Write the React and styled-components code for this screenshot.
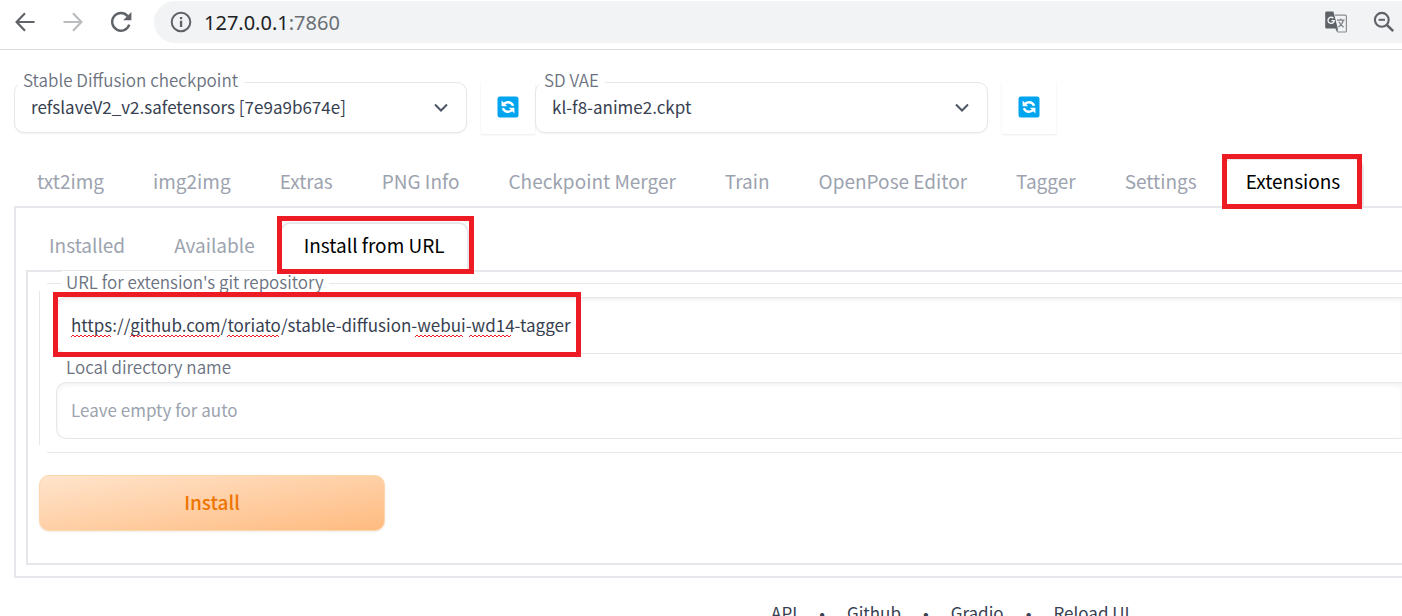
import React, { useState } from "react";
import styled, { createGlobalStyle, css } from "styled-components";

const GlobalStyle = createGlobalStyle`
  *, *::before, *::after { box-sizing: border-box; }
  body {
    margin: 0;
    background: #ffffff;
    color: #374151;
    font-family: "Noto Sans CJK KR", "Noto Sans CJK SC", "Noto Sans", sans-serif;
    font-weight: 400;
  }
  button, input, select { font: inherit; color: inherit; margin: 0; }
`;

const line = "#e5e7eb";
const red = "#ed1c24";

const Window = styled.div`
  height: 100vh;
  overflow: hidden;
`;

/* Browser toolbar */

const BrowserBar = styled.header`
  display: flex;
  align-items: flex-start;
  height: 50px;
  padding: 1px 0 0 1px;
  border-bottom: 1px solid #dadce0;
`;

const BarButton = styled.button`
  display: flex;
  align-items: center;
  justify-content: center;
  flex: none;
  width: ${(p) => (p.$compact ? 36 : 48)}px;
  height: 42px;
  padding: 0;
  border: 0;
  background: none;
  color: ${(p) => (p.$dim ? "#babcbe" : "#5f6368")};
`;

const AddressBar = styled.div`
  display: flex;
  align-items: center;
  flex: 1;
  height: 42px;
  margin-left: 9px;
  border-radius: 21px 0 0 21px;
  background: #f1f3f4;
`;

const PageActions = styled.div`
  display: flex;
  gap: 12px;
`;

const SiteInfo = styled.button`
  display: flex;
  padding: 0 12px 0 16px;
  border: 0;
  background: none;
  color: #5f6368;
`;

const Address = styled.div`
  flex: 1;
  padding-top: 2px;
  font-family: "Noto Sans", "Open Sans", sans-serif;
  font-size: 20px;
  font-weight: 400;
  line-height: 28px;
  color: #202124;
`;

const Port = styled.span`
  color: #6b6f74;
`;

/* Checkpoint and VAE pickers */

const Main = styled.main`
  padding: 32px 0 0 14px;
`;

const QuickSettings = styled.section`
  display: flex;
  align-items: flex-start;
`;

const Picker = styled.div`
  position: relative;
  flex: 0 1 453px;
  margin-right: 14px;
`;

const labelText = css`
  font-size: 17px;
  font-weight: 350;
  line-height: 22px;
  color: #6b7280;
`;

const PickerLabel = styled.label`
  position: absolute;
  top: -13px;
  left: 4px;
  padding: 0 6px 0 5px;
  background: #ffffff;
  ${labelText}
`;

const PickerSelect = styled.select`
  display: block;
  width: 100%;
  height: 51px;
  padding: 0 48px 2px 16px;
  border: 1px solid ${line};
  border-radius: 10px;
  background: #ffffff;
  box-shadow: 0 1px 2px rgba(0, 0, 0, 0.05);
  appearance: none;
  font-size: 17px;
  color: #374151;
`;

const PickerArrow = styled.svg`
  position: absolute;
  top: 20px;
  right: 19px;
  pointer-events: none;
`;

const RefreshButton = styled.button`
  display: flex;
  align-items: center;
  justify-content: center;
  flex: none;
  width: 54px;
  height: 52px;
  padding: 0 0 2px;
  border: 0;
  background: #ffffff;
  box-shadow: 0 1px 2px rgba(0, 0, 0, 0.08);
`;

/* Tabs */

const TabList = styled.div`
  display: flex;
  gap: 1px;
  height: ${(p) => p.$height}px;
  margin-left: -1px;
  align-items: flex-end;
`;

const highlight = css`
  &::after {
    content: "";
    position: absolute;
    inset: ${(p) => p.$frame};
    border: 5px solid ${red};
    pointer-events: none;
    z-index: 2;
  }
`;

const TabButton = styled.button`
  position: relative;
  flex: none;
  height: 50px;
  margin-bottom: -2px;
  padding: 0 22px 6px;
  border: 2px solid transparent;
  border-bottom: 0;
  border-radius: 10px 10px 0 0;
  background: none;
  font-size: 19px;
  line-height: 42px;
  color: #9ca3af;

  &[aria-selected="true"] {
    border-color: ${line};
    background: #ffffff;
    color: #000000;
  }

  ${(p) => p.$frame && highlight}
`;

const Panel = styled.section`
  border: 2px solid ${line};
  border-right: 0;
  padding: ${(p) => (p.$inner ? "11px 0 32px 11px" : "10px 0 11px 10px")};
`;

/* Install form */

const Group = styled.div`
  position: relative;
  padding: 14px 0 14px 17px;

  &::before,
  &::after {
    content: "";
    position: absolute;
    border: 0 solid ${line};
    pointer-events: none;
  }
  &::before {
    inset: 0 0 0 8px;
    border-width: 1px 0;
  }
  &::after {
    inset: 8px 0 8px 0;
    border-left-width: 1px;
  }
`;

const GroupLabel = styled.label`
  display: block;
  height: 28px;
  padding: 2px 0 0 10px;
  ${labelText}
`;

const FloatingLabel = styled.label`
  position: absolute;
  z-index: 1;
  top: -12px;
  left: 22px;
  padding: 0 5px;
  background: #ffffff;
  ${labelText}
`;

const Field = styled.div`
  position: relative;
  z-index: 1;
`;

const TextBox = styled.input`
  display: block;
  width: 100%;
  height: 57px;
  padding: 0 14px 2px;
  border: 1px solid ${line};
  border-right: 0;
  border-radius: 10px 0 0 10px;
  background: #ffffff;
  box-shadow: inset 0 2px 4px rgba(0, 0, 0, 0.06);
  font-size: 17px;
  color: #374151;

  &::placeholder {
    color: #9ca3af;
    opacity: 1;
  }
`;

const Squiggles = styled.svg`
  position: absolute;
  top: 37px;
  left: 15px;
  pointer-events: none;
`;

const Frame = styled.div`
  position: absolute;
  top: -5px;
  left: -3px;
  width: 528px;
  height: 65px;
  border: 5px solid ${red};
  pointer-events: none;
`;

const InstallButton = styled.button`
  display: block;
  width: 346px;
  height: 56px;
  margin-top: 22px;
  padding: 0 0 3px;
  border: 1px solid #fed7aa;
  border-radius: 10px;
  background: linear-gradient(to bottom right, #ffe4cc, #ffbb80);
  box-shadow: 0 1px 2px rgba(0, 0, 0, 0.08);
  font-size: 19px;
  font-weight: 500;
  color: #ee7400;
`;

const Footer = styled.footer`
  display: flex;
  gap: 22px;
  padding: 23px 0 0 55%;
  font-size: 17px;
  line-height: 24px;
  white-space: nowrap;

  a {
    color: inherit;
    text-decoration: none;
  }
`;

const BackIcon = () => (
  <svg width="20" height="20" viewBox="0 0 20 20" fill="none" stroke="currentColor" strokeWidth="2.2">
    <path d="M19.5 10H2M10 1.2L1.6 10L10 18.8" />
  </svg>
);

const ForwardIcon = () => (
  <svg width="20" height="20" viewBox="0 0 20 20" fill="none" stroke="currentColor" strokeWidth="2.2">
    <path d="M.5 10H18M10 1.2L18.4 10L10 18.8" />
  </svg>
);

const ReloadIcon = () => (
  <svg width="22" height="22" viewBox="0 0 22 22" fill="none">
    <path d="M19.3 13.6A8.8 8.8 0 1 1 17.6 5.1" stroke="currentColor" strokeWidth="2.4" />
    <path d="M21.4 1V9.2H13.2Z" fill="currentColor" />
  </svg>
);

const InfoIcon = () => (
  <svg width="22" height="22" viewBox="0 0 22 22" fill="none">
    <circle cx="11" cy="11" r="9.3" stroke="currentColor" strokeWidth="2" />
    <path d="M9.9 9.8h2.3v6.2H9.9zM9.9 6h2.3v2.3H9.9z" fill="currentColor" />
  </svg>
);

const TranslateIcon = () => (
  <svg width="22" height="22" viewBox="0 0 22 22" fill="none">
    <path d="M10 4.2h10.2a1.2 1.2 0 0 1 1.2 1.2v14.4a1.2 1.2 0 0 1-1.2 1.2h-7.4l-2-4" stroke="#8a8d91" strokeWidth="1.2" />
    <path d="M1.6.6h6.8l4.4 17H1.6A1.4 1.4 0 0 1 .2 16.2V2A1.4 1.4 0 0 1 1.6.6Z" fill="#5f6368" />
    <path d="M10.6 17.4h2.6l-1.3 3.2z" fill="#5f6368" />
    <path d="M8.4 7.2a3.1 3.1 0 1 0 .8 2.4H6.4" stroke="#f1f3f4" strokeWidth="1.4" />
    <path d="M12 9.2h7.6M15.8 7.4v1.8M18.3 9.4c-.6 2.7-2.4 5-4.8 6.6M13.9 10.8c.9 2.2 2.5 3.9 4.7 5.4" stroke="#7d8085" strokeWidth="1.2" />
  </svg>
);

const ZoomOutIcon = () => (
  <svg width="22" height="22" viewBox="0 0 22 22" fill="none" stroke="currentColor">
    <circle cx="8.8" cy="8.8" r="6.9" strokeWidth="2.1" />
    <path d="M5.6 8.8h6.4" strokeWidth="2" />
    <path d="M13.8 13.8L20.2 20.2" strokeWidth="2.6" />
  </svg>
);

const RefreshIcon = () => (
  <svg width="22" height="22" viewBox="0 0 22 22">
    <rect x=".5" y=".5" width="21" height="21" rx="2.5" fill="#00a4ef" />
    <g fill="none" stroke="#fff" strokeWidth="2.4">
      <path d="M6.4 8.6C8.6 5.4 14 5 16.2 9.8" />
      <path d="M15.6 13.4C13.4 16.6 8 17 5.8 12.2" />
    </g>
    <path d="M4.6 4.6v5.6h5.6zM17.4 17.4v-5.6h-5.6z" fill="#fff" />
  </svg>
);

const Chevron = () => (
  <PickerArrow width="14" height="12" viewBox="0 0 14 12" fill="none" aria-hidden="true">
    <path d="M1 2.5L7 8.5L13 2.5" stroke="#4b5563" strokeWidth="2" />
  </PickerArrow>
);

const misspelled = [
  [0, 41],
  [59, 149],
  [156, 209],
  [344, 392],
  [398, 441],
];

const wave = ([from, to]) => {
  let d = `M${from} 3`;
  for (let x = from + 2, up = true; x <= to; x += 2, up = !up) d += `L${x} ${up ? 1 : 3}`;
  return d;
};

const mainTabs = [
  "txt2img",
  "img2img",
  "Extras",
  "PNG Info",
  "Checkpoint Merger",
  "Train",
  "OpenPose Editor",
  "Tagger",
  "Settings",
  "Extensions",
];
const extensionTabs = ["Installed", "Available", "Install from URL"];
const footerLinks = ["API", "Github", "Gradio", "Reload UI"];

function QuickPicker({ id, label, value }) {
  return (
    <>
      <Picker>
        <PickerSelect id={id} defaultValue={value}>
          <option>{value}</option>
        </PickerSelect>
        <PickerLabel htmlFor={id}>{label}</PickerLabel>
        <Chevron />
      </Picker>
      <RefreshButton aria-label={`Refresh ${label}`}>
        <RefreshIcon />
      </RefreshButton>
    </>
  );
}

function Tabs({ names, active, height, frame }) {
  return (
    <TabList role="tablist" $height={height}>
      {names.map((name) => (
        <TabButton
          key={name}
          role="tab"
          aria-selected={name === active}
          $frame={name === active ? frame : undefined}
        >
          {name}
        </TabButton>
      ))}
    </TabList>
  );
}

export default function App() {
  const [url, setUrl] = useState("https://github.com/toriato/stable-diffusion-webui-wd14-tagger");
  const [directory, setDirectory] = useState("");

  return (
    <Window>
      <GlobalStyle />
      <BrowserBar>
        <BarButton aria-label="Back"><BackIcon /></BarButton>
        <BarButton aria-label="Forward" $dim><ForwardIcon /></BarButton>
        <BarButton aria-label="Reload"><ReloadIcon /></BarButton>
        <AddressBar>
          <SiteInfo aria-label="Site information"><InfoIcon /></SiteInfo>
          <Address>127.0.0.1<Port>:7860</Port></Address>
          <PageActions>
            <BarButton aria-label="Translate" $compact><TranslateIcon /></BarButton>
            <BarButton aria-label="Zoom out" $compact><ZoomOutIcon /></BarButton>
          </PageActions>
        </AddressBar>
      </BrowserBar>

      <Main>
        <QuickSettings>
          <QuickPicker id="checkpoint" label="Stable Diffusion checkpoint" value="refslaveV2_v2.safetensors [7e9a9b674e]" />
          <QuickPicker id="vae" label="SD VAE" value="kl-f8-anime2.ckpt" />
        </QuickSettings>

        <Tabs names={mainTabs} active="Extensions" height={72} frame="-6px 0 -1px -2px" />
        <Panel>
          <Tabs names={extensionTabs} active="Install from URL" height={52} frame="-8px -7px -2px -5px" />
          <Panel $inner>
            <Group>
              <FloatingLabel htmlFor="url">URL for extension's git repository</FloatingLabel>
              <Field>
                <TextBox id="url" value={url} spellCheck={false} onChange={(e) => setUrl(e.target.value)} />
                <Squiggles width="442" height="4" viewBox="0 0 442 4" fill="none" stroke={red} aria-hidden="true">
                  {misspelled.map((range) => (
                    <path key={range[0]} d={wave(range)} />
                  ))}
                </Squiggles>
                <Frame />
              </Field>
              <GroupLabel htmlFor="directory">Local directory name</GroupLabel>
              <TextBox
                id="directory"
                value={directory}
                placeholder="Leave empty for auto"
                onChange={(e) => setDirectory(e.target.value)}
              />
            </Group>
            <InstallButton>Install</InstallButton>
          </Panel>
        </Panel>
      </Main>

      <Footer>
        {footerLinks.map((name, i) => (
          <React.Fragment key={name}>
            {i > 0 && <span>•</span>}
            <a href={`#${name}`}>{name}</a>
          </React.Fragment>
        ))}
      </Footer>
    </Window>
  );
}
